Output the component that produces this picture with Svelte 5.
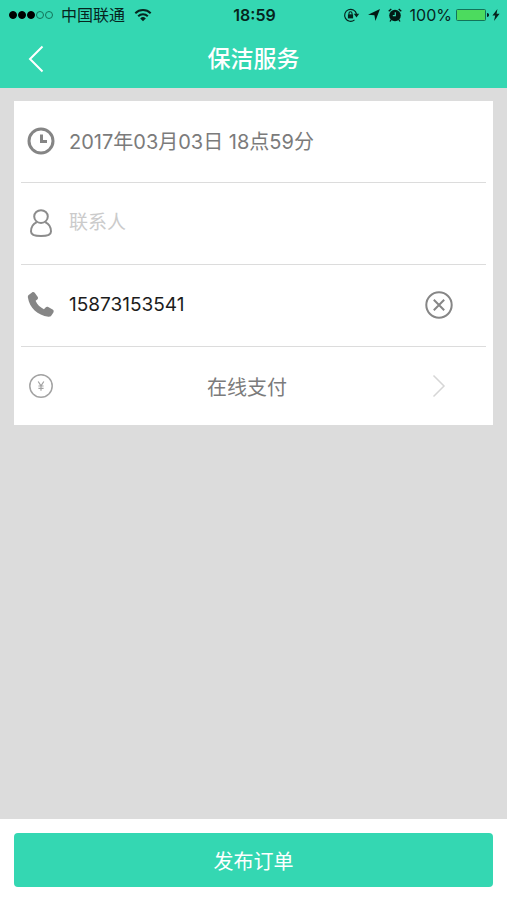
<script lang="ts">
	let contact = $state("")
	let phone = $state("15873153541")
	let phoneInput: HTMLInputElement

	const signal = [true, true, true, false, false]

	const clearPhone = () => {
		phone = ""
		phoneInput.focus()
	}

	const submit = (event: SubmitEvent) => {
		event.preventDefault()
	}
</script>

<form class="page" onsubmit={submit}>
	<header>
		<div class="status">
			<div class="side">
				<span class="signal">
					{#each signal as on}
						<i class:on></i>
					{/each}
				</span>
				<span class="carrier">中国联通</span>
				<svg class="wifi" width="18" height="14" viewBox="0 0 18 14" aria-hidden="true">
					<g fill="none" stroke="#06251e" stroke-width="2">
						<path d="M1.3 5.2a11 11 0 0 1 15.4 0" />
						<path d="M4.2 8.3a6.8 6.8 0 0 1 9.6 0" />
					</g>
					<path d="M6.2 10.4a4 4 0 0 1 5.6 0L9 13.2z" fill="#06251e" />
				</svg>
			</div>
			<time>18:59</time>
			<div class="side end">
				<svg class="lock" width="17" height="16" viewBox="0 0 17 16" aria-hidden="true">
					<path d="M11.5 12.9A6 6 0 1 1 13.5 7" fill="none" stroke="#06251e" stroke-width="1.2" />
					<path d="M10.8 6.8h5.4l-2.7 3.6z" fill="#06251e" />
					<path d="M4.9 7.3h5.2v4.1H4.9z" fill="#06251e" />
					<path d="M6 7.5V6.2a1.5 1.5 0 0 1 3 0v1.3" fill="none" stroke="#06251e" stroke-width="1.1" />
				</svg>
				<svg class="location" width="12" height="12" viewBox="0 0 12 12" aria-hidden="true">
					<path d="M12 0 7.400 12 6.400 6.200 0 5.800z" fill="#021a14" />
				</svg>
				<svg class="alarm" width="14" height="14" viewBox="0 0 14 14" aria-hidden="true">
					<circle cx="7" cy="7.5" r="5.800" fill="#021a14" />
					<path d="M.7 3.300 3.300.9M13.300 3.300 10.700.9M3.300 11.500 2 13.500M10.700 11.500l1.300 2" stroke="#021a14" stroke-width="1.300" />
					<path d="M7.300 4.300v3.400H4.800" fill="none" stroke="#34d7b2" stroke-width="1.2" />
				</svg>
				<span class="percent">100%</span>
				<svg class="battery" width="34" height="14" viewBox="0 0 34 14" aria-hidden="true">
					<rect x=".5" y="1.5" width="29" height="11" rx="1" fill="#4cdb5e" stroke="#12745a" />
					<path d="M31 5c1.600.3 2 1 2 2s-.4 1.700-2 2z" fill="#06251e" />
				</svg>
				<svg class="bolt" width="8" height="12" viewBox="0 0 8 12" aria-hidden="true">
					<path d="M5.400 0 .4 6.600h2.800L2 12l5.600-7.200H4.600z" fill="#06251e" />
				</svg>
			</div>
		</div>
		<nav>
			<button type="button" class="back" aria-label="返回">
				<svg width="16" height="28" viewBox="0 0 16 28" aria-hidden="true">
					<path d="M14.500 1.500 2 14l12.500 12.500" fill="none" stroke="#fff" stroke-width="2" />
				</svg>
			</button>
			<h1>保洁服务</h1>
		</nav>
	</header>

	<main>
		<section>
			<button type="button" class="row date">
				<svg class="icon" viewBox="0 0 28 28" aria-hidden="true">
					<circle cx="14" cy="14" r="12" fill="none" stroke="#858585" stroke-width="3" />
					<path d="M14.500 7.500v7H20" fill="none" stroke="#858585" stroke-width="3" />
				</svg>
				<span>2017年03月03日 18点59分</span>
			</button>

			<div class="row">
				<label for="contact" aria-label="联系人">
					<svg class="icon" viewBox="0 0 28 28" aria-hidden="true">
						<g fill="none" stroke="#8c8c8c" stroke-width="2">
							<ellipse cx="14" cy="7.600" rx="6.800" ry="6.400" />
							<path d="M9.800 13.200C6 15 4 18.500 4 22.500c0 3.200 3 4.500 10 4.500s10-1.300 10-4.500c0-4-2-7.500-5.800-9.300" />
						</g>
					</svg>
				</label>
				<input id="contact" type="text" placeholder="联系人" bind:value={contact} />
			</div>

			<div class="row">
				<label for="phone" aria-label="电话">
					<svg class="icon" viewBox="0 0 28 28" aria-hidden="true">
						<path d="M2 3.700 5 1.400c.9-.7 2-.6 2.700.3l2.900 4c.7.9.5 2-.3 2.700L8.600 9.800c1.600 3.800 4.400 6.600 8.300 8.400l1.700-1.700c.7-.8 1.700-.9 2.600-.4l4.400 2.500c1.100.6 1.400 1.800.8 2.800l-2 3.200c-.7 1-1.800 1.300-3 1.100C10.500 24.300 2.500 17 .9 6.500.7 5.300 1 4.400 2 3.700z" fill="#868686" />
					</svg>
				</label>
				<input id="phone" type="tel" bind:value={phone} bind:this={phoneInput} />
				<button type="button" class="clear" aria-label="清除" onclick={clearPhone}>
					<svg class="icon" viewBox="0 0 28 28" aria-hidden="true">
						<g fill="none" stroke="#868686" stroke-width="2">
							<circle cx="14" cy="14" r="12.700" />
							<path d="m8.800 8.800 10.400 10.400M19.200 8.800 8.800 19.200" />
						</g>
					</svg>
				</button>
			</div>

			<button type="button" class="row payment">
				<svg class="icon" viewBox="0 0 28 28" aria-hidden="true">
					<g fill="none" stroke="#a3a3a3">
						<circle cx="14" cy="14" r="11.200" stroke-width="1.500" />
						<path d="m11.200 9.500 2.800 4.300 2.800-4.300M14 13.800v5M11.400 14h5.200M11.400 16.300h5.200" stroke-width="1.200" />
					</g>
				</svg>
				<span>在线支付</span>
				<svg class="icon" viewBox="0 0 28 28" aria-hidden="true">
					<path d="m8.500 3.500 10.500 10.500-10.500 10.500" fill="none" stroke="#d6d6d6" stroke-width="1.500" />
				</svg>
			</button>
		</section>
	</main>

	<footer>
		<button type="submit" class="publish">发布订单</button>
	</footer>
</form>

<style>
	:global(body) {
		margin: 0;
		background: #dcdcdc;
	}

	.page {
		--green: #34d7b2;
		--ink: #06251e;
		display: flex;
		flex-direction: column;
		min-height: 100vh;
		background: #dcdcdc;
		font-family: Inter, "Noto Sans CJK SC", sans-serif;
		font-size: 19px;
		color: #7b7b7b;
	}

	button {
		padding: 0;
		border: none;
		background: none;
		font: inherit;
		color: inherit;
		cursor: pointer;
	}

	svg {
		display: block;
		flex: none;
	}

	header {
		background: var(--green);
	}

	.status {
		display: grid;
		grid-template-columns: 1fr auto 1fr;
		align-items: center;
		height: 30px;
		padding: 0 7px 0 9px;
		font-size: 16px;
		line-height: 20px;
		color: var(--ink);
	}

	.side {
		display: flex;
		align-items: center;
	}

	.end {
		justify-content: flex-end;
	}

	.signal {
		display: flex;
		gap: 1px;
		margin-right: 8px;
	}

	.signal i {
		box-sizing: border-box;
		width: 8px;
		height: 8px;
		border: 1px solid #12745a;
		border-radius: 50%;
	}

	.signal .on {
		border-color: #000;
		background: #000;
	}

	.wifi {
		margin-left: 9px;
	}

	time {
		font-weight: 600;
	}

	.location {
		margin: 0 8px;
	}

	.percent {
		margin: 0 4px 0 8px;
	}

	.bolt {
		margin-left: 2px;
	}

	nav {
		display: grid;
		grid-template-columns: 56px 1fr 56px;
		align-items: center;
		height: 58px;
	}

	.back {
		display: flex;
		justify-content: flex-end;
		padding: 0 12px;
	}

	h1 {
		margin: 0;
		font-size: 23px;
		font-weight: 500;
		line-height: 32px;
		text-align: center;
		color: #fff;
	}

	main {
		flex: 1;
		padding: 13px 14px;
	}

	section {
		padding: 0 7px;
		background: #fff;
	}

	.row {
		box-sizing: border-box;
		display: flex;
		align-items: center;
		width: 100%;
		height: 82px;
		padding: 0 33px 2px 6px;
		border-bottom: 1px solid #dcdcdc;
		text-align: left;
	}

	.row:last-child {
		height: 78px;
		padding-bottom: 0;
		border-bottom: none;
	}

	.icon {
		width: 28px;
		height: 28px;
	}

	.row > span,
	input {
		flex: 1;
		min-width: 0;
		margin-left: 14px;
	}

	input {
		padding: 0;
		border: none;
		outline: none;
		background: none;
		font: inherit;
		line-height: 28px;
		color: #1c1c1c;
	}

	input::placeholder {
		color: #cbcbcb;
		opacity: 1;
	}

	.date span {
		font-size: 20px;
	}

	.payment span {
		font-size: 20px;
		text-align: center;
	}

	footer {
		padding: 14px 14px 13px;
		background: #fff;
	}

	.publish {
		display: block;
		width: 100%;
		height: 54px;
		border-radius: 4px;
		background: var(--green);
		font-size: 20px;
		color: #fff;
	}
</style>
